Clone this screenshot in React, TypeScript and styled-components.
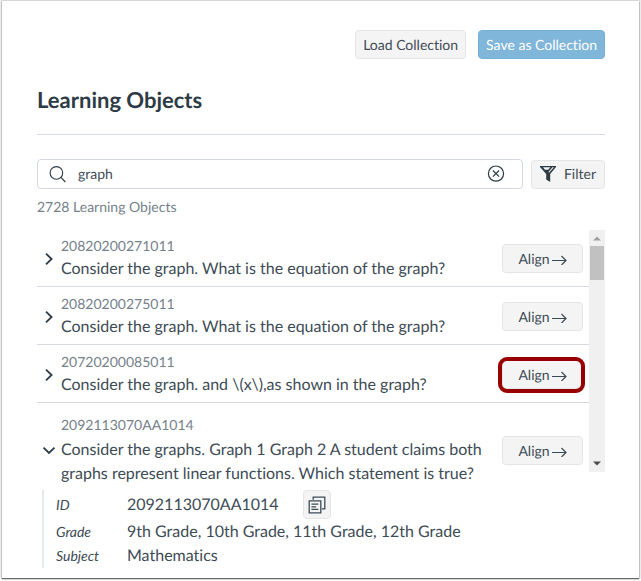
import React, { useState } from "react";
import styled, { createGlobalStyle, css } from "styled-components";

const ink = "#3d4b55";
const muted = "#75818a";
const line = "#d5dade";

const GlobalStyle = createGlobalStyle`
  *, *::before, *::after { box-sizing: border-box; }
  body {
    margin: 0;
    background: #fff;
    color: ${ink};
    font-family: Lato, "Liberation Sans", sans-serif;
    font-size: 16px;
    line-height: 24px;
    font-variant-ligatures: none;
    text-rendering: geometricPrecision;
  }
  button, input {
    font: inherit;
    color: inherit;
    font-variant-ligatures: none;
    text-rendering: inherit;
  }
`;

const Panel = styled.main`
  margin: 1px 2px 2px;
  padding: 29px 34px 10px 35px;
  background: #fff;
  box-shadow: 0 0 2px 1px rgba(0, 0, 0, 0.24), 0 1px 1px rgba(0, 0, 0, 0.5);
`;

const Toolbar = styled.div`
  display: flex;
  justify-content: flex-end;
  gap: 12px;
`;

const Button = styled.button<{ $primary?: boolean }>`
  display: inline-flex;
  align-items: center;
  justify-content: center;
  height: 29px;
  padding: 0 7px;
  border: 1px solid #e3e5e7;
  border-radius: 4px;
  background: #f4f4f4;
  font-size: 14px;
  line-height: 20px;
  white-space: nowrap;
  cursor: pointer;
  ${(p) =>
    p.$primary &&
    css`
      border-color: #74b0d6;
      background: #80b6da;
      color: #fff;
    `}
`;

const Title = styled.h1`
  margin: 26px 0 0;
  padding-bottom: 19px;
  border-bottom: 1px solid ${line};
  color: #2d3b45;
  font-size: 22px;
  line-height: 30px;
  font-weight: 700;
`;

const SearchRow = styled.form`
  display: flex;
  align-items: center;
  gap: 8px;
  margin-top: 24px;
`;

const SearchBox = styled.div`
  display: flex;
  flex: 1;
  align-items: center;
  height: 30px;
  padding: 0 17px 0 11px;
  border: 1px solid #d3d9de;
  border-radius: 4px;
`;

const SearchInput = styled.input`
  flex: 1;
  min-width: 0;
  margin-left: 11px;
  padding: 0;
  border: 0;
  outline: 0;
  background: transparent;
  font-size: 14px;
`;

const IconButton = styled.button`
  display: flex;
  padding: 0;
  border: 0;
  background: none;
  cursor: pointer;
`;

const FilterButton = styled(Button)`
  gap: 8px;
  padding: 0 8px;
`;

const Count = styled.p`
  margin: 8px 0 0;
  color: ${muted};
  font-size: 14px;
  line-height: 20px;
`;

const Results = styled.div`
  display: flex;
  margin-top: 12px;
`;

const List = styled.ul`
  flex: 1;
  min-width: 0;
  margin: 0;
  padding: 0;
  list-style: none;
`;

const Row = styled.li<{ $open?: boolean }>`
  display: flex;
  align-items: center;
  padding: 7px 6px 5px 4px;
  border-bottom: 1px solid ${line};
  ${(p) =>
    p.$open &&
    css`
      padding: 12px 6px 0 4px;
      border-bottom: 0;
    `}
`;

const Toggle = styled(IconButton)`
  margin-right: 4px;
`;

const RowText = styled.div<{ $open?: boolean }>`
  display: flex;
  flex: 1;
  flex-direction: column;
  gap: ${(p) => (p.$open ? 3 : 1)}px;
  min-width: 0;
  padding-right: 16px;
`;

const ObjectId = styled.span`
  color: ${muted};
  font-size: 14px;
  line-height: 20px;
`;

const AlignButton = styled(Button)<{ $marked?: boolean }>`
  position: relative;
  width: 81px;
  gap: 2px;
  ${(p) =>
    p.$marked &&
    css`
      &::after {
        content: "";
        position: absolute;
        inset: -4px -3px -5px -5px;
        border: 4px solid #990000;
        border-radius: 9px;
      }
    `}
`;

const ScrollTrack = styled.div`
  display: flex;
  flex-direction: column;
  width: 16px;
  margin: 1px 0 14px;
  background: #f0f0f0;
`;

const ScrollArrow = styled.svg`
  display: block;
  width: 16px;
  height: 16px;
`;

const ScrollThumb = styled.div`
  height: 34px;
  margin: 0 1px auto;
  background: #c1c1c1;
`;

const Details = styled.dl`
  margin: 4px 0 0 5px;
  padding-left: 12px;
  border-left: 2px solid #e6eaea;
`;

const DetailRow = styled.div`
  display: grid;
  grid-template-columns: 71px 1fr;
  align-items: center;

  &:first-child {
    margin-bottom: 1px;
  }
`;

const DetailLabel = styled.dt`
  font-size: 14px;
  font-style: italic;
`;

const DetailValue = styled.dd`
  display: flex;
  align-items: center;
  gap: 24px;
  margin: 0;
`;

const CopyButton = styled(Button)`
  width: 28px;
  padding: 0;
`;

const SearchIcon = () => (
  <svg width="18" height="18" viewBox="0 0 18 18" fill="none" stroke="#2d3b45" strokeWidth="1.1" aria-hidden="true">
    <circle cx="7.4" cy="7.9" r="6.3" />
    <path d="M11.9 12.4 16.4 17" />
  </svg>
);

const ClearIcon = () => (
  <svg width="18" height="18" viewBox="0 0 18 18" fill="none" stroke="#2d3b45" strokeWidth="1.2" aria-hidden="true">
    <circle cx="9" cy="8.6" r="7.6" />
    <path d="m5.9 5.5 6.2 6.2M12.1 5.5l-6.2 6.2" />
  </svg>
);

const FilterIcon = () => (
  <svg width="16" height="16" viewBox="0 0 16 16" aria-hidden="true">
    <path
      fill="#2d3b45"
      fillRule="evenodd"
      d="M0 0H16V1L10.2 8V16L6.2 13.6V8L0 1ZM3 1.2 4.9 3.8H8.2L10.4 1.2ZM12.4 1.2 8.5 6 9.1 6.7 13.9 1.2Z"
    />
  </svg>
);

const Chevron = ({ open }: { open?: boolean }) => (
  <svg width="16" height="16" viewBox="0 0 16 16" fill="none" stroke="#2d3b45" strokeWidth="1.8" aria-hidden="true">
    <path d={open ? "m2.5 4.6 5.5 5.4 5.5-5.4" : "m5 2.6 5.6 5.4L5 13.4"} />
  </svg>
);

const ArrowIcon = () => (
  <svg width="15" height="12" viewBox="0 0 15 12" fill="none" stroke={ink} strokeWidth="1.2" aria-hidden="true">
    <path d="M0 7.5h14M9.5 3 14 7.5 9.5 12" />
  </svg>
);

const CopyIcon = () => (
  <svg width="18" height="18" viewBox="0 0 18 18" fill="none" stroke={ink} strokeWidth="1.3" aria-hidden="true">
    <path d="M5.2 3.8V1.2H16.8V12.8H13.8" />
    <path d="M1.2 4.9H12.8V16.8H1.2ZM3.4 8.2H10.4M3.4 10.8H8.2M3.4 13.4H10.4" />
  </svg>
);

const items = [
  { id: "20820200271011", text: "Consider the graph. What is the equation of the graph?" },
  { id: "20820200275011", text: "Consider the graph. What is the equation of the graph?" },
  { id: "20720200085011", text: "Consider the graph. and \\(x\\),as shown in the graph?", marked: true },
  {
    id: "2092113070AA1014",
    text: "Consider the graphs. Graph 1 Graph 2 A student claims both graphs represent linear functions. Which statement is true?",
    open: true,
  },
];

export default function App() {
  const [query, setQuery] = useState("graph");

  return (
    <>
      <GlobalStyle />
      <Panel>
        <Toolbar>
          <Button type="button">Load Collection</Button>
          <Button type="button" $primary>Save as Collection</Button>
        </Toolbar>
        <Title>Learning Objects</Title>
        <SearchRow onSubmit={(e) => e.preventDefault()}>
          <SearchBox>
            <SearchIcon />
            <SearchInput
              type="text"
              aria-label="Search learning objects"
              value={query}
              onChange={(e) => setQuery(e.target.value)}
            />
            <IconButton type="button" aria-label="Clear search" onClick={() => setQuery("")}>
              <ClearIcon />
            </IconButton>
          </SearchBox>
          <FilterButton type="button">
            <FilterIcon />
            Filter
          </FilterButton>
        </SearchRow>
        <Count>2728 Learning Objects</Count>
        <Results>
          <List>
            {items.map((item) => (
              <Row key={item.id} $open={item.open}>
                <Toggle type="button" aria-label={`Details of ${item.id}`} aria-expanded={!!item.open}>
                  <Chevron open={item.open} />
                </Toggle>
                <RowText $open={item.open}>
                  <ObjectId>{item.id}</ObjectId>
                  <span>{item.text}</span>
                </RowText>
                <AlignButton type="button" $marked={item.marked}>
                  Align
                  <ArrowIcon />
                </AlignButton>
              </Row>
            ))}
          </List>
          <ScrollTrack aria-hidden="true">
            <ScrollArrow viewBox="0 0 16 16">
              <path d="M4 10.5 8 6.5l4 4Z" fill="#a0a0a0" />
            </ScrollArrow>
            <ScrollThumb />
            <ScrollArrow viewBox="0 0 16 16">
              <path d="M4 5.5h8l-4 4Z" fill="#4d4d4d" />
            </ScrollArrow>
          </ScrollTrack>
        </Results>
        <Details>
          <DetailRow>
            <DetailLabel>ID</DetailLabel>
            <DetailValue>
              2092113070AA1014
              <CopyButton type="button" aria-label="Copy ID">
                <CopyIcon />
              </CopyButton>
            </DetailValue>
          </DetailRow>
          <DetailRow>
            <DetailLabel>Grade</DetailLabel>
            <DetailValue>9th Grade, 10th Grade, 11th Grade, 12th Grade</DetailValue>
          </DetailRow>
          <DetailRow>
            <DetailLabel>Subject</DetailLabel>
            <DetailValue>Mathematics</DetailValue>
          </DetailRow>
        </Details>
      </Panel>
    </>
  );
}
